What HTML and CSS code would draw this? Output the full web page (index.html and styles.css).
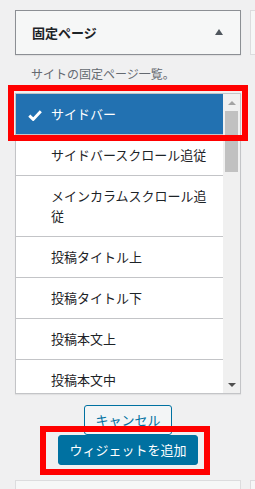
FILE: index.html
```html
<!DOCTYPE html>
<html lang="ja">
<head>
    <meta charset="UTF-8">
    <meta name="viewport" content="width=device-width, initial-scale=1.0">
    <title>ウィジェット</title>
    <link rel="stylesheet" href="styles.css">
</head>
<body>
    <div class="screen">
        <div class="area">
            <div class="widget-top">
                <h3 class="widget-title">固定ページ</h3>
                <span class="toggle-arrow"></span>
            </div>
            <p class="desc">サイトの固定ページ一覧。</p>
            <div class="picker">
                <ul class="options">
                    <li class="option selected">
                        <span class="mark">
                            <svg width="14" height="11" viewBox="0 0 14 11"><path d="M1.3 5.6 L5.2 9.4 L12.8 1.3" fill="none" stroke="#fff" stroke-width="2.9"/></svg>
                        </span>
                        <span class="label">サイドバー</span>
                    </li>
                    <li class="option"><span class="mark"></span><span class="label">サイドバースクロール追従</span></li>
                    <li class="option"><span class="mark"></span><span class="label">メインカラムスクロール追従</span></li>
                    <li class="option"><span class="mark"></span><span class="label">投稿タイトル上</span></li>
                    <li class="option"><span class="mark"></span><span class="label">投稿タイトル下</span></li>
                    <li class="option"><span class="mark"></span><span class="label">投稿本文上</span></li>
                    <li class="option"><span class="mark"></span><span class="label">投稿本文中</span></li>
                    <li class="option"><span class="mark"></span><span class="label">投稿本文下</span></li>
                </ul>
                <div class="scrollbar">
                    <span class="step"><span class="arrow-up"></span></span>
                    <span class="thumb"></span>
                    <span class="step bottom"><span class="arrow-down"></span></span>
                </div>
            </div>
            <div class="actions">
                <button class="btn cancel">キャンセル</button>
                <button class="btn add">ウィジェットを追加</button>
            </div>
            <div class="widget-next"></div>
        </div>
        <div class="area side">
            <div class="side-top"></div>
            <div class="side-next"></div>
        </div>
    </div>

    <div class="highlight first"></div>
    <div class="highlight second"></div>
</body>
</html>
```

FILE: styles.css
```css
* {
    box-sizing: border-box;
}

body {
    margin: 0;
    background-color: #f0f0f1;
    font-family: "Noto Sans CJK JP", "Noto Sans", sans-serif;
    color: #1d2327;
    overflow: hidden;
}

.screen {
    display: flex;
    gap: 9px;
    padding: 10px 0 0 15px;
}

.area {
    width: 226px;
    flex: none;
}

.widget-top {
    height: 45px;
    display: flex;
    align-items: center;
    justify-content: space-between;
    padding: 0 17px 0 16px;
    background-color: #f6f7f7;
    border: 1px solid #8c8f94;
    box-shadow: 0 1px 1px rgba(0, 0, 0, 0.06);
}

.widget-title {
    margin: 0;
    font-size: 13px;
    font-weight: 700;
    line-height: 20px;
}

.toggle-arrow {
    width: 0;
    height: 0;
    border-left: 4px solid transparent;
    border-right: 4px solid transparent;
    border-bottom: 6px solid #50575e;
    margin-top: -1px;
}

.desc {
    margin: 10px 0 10px 16px;
    font-size: 12px;
    line-height: 18px;
    color: #646970;
}

.picker {
    display: flex;
    height: 301px;
    background: #fff;
    border: 1px solid #c3c4c7;
    box-shadow: 0 1px 1px rgba(0, 0, 0, 0.06);
    overflow: hidden;
}

.options {
    list-style: none;
    margin: 0;
    padding: 0;
    flex: 1;
}

.option {
    display: flex;
    padding: 10px 10px 10px 12px;
    font-size: 13px;
    line-height: 20px;
    color: #1d2327;
    border-bottom: 1px solid #c3c4c7;
}

.option .mark {
    width: 23px;
    flex: none;
    display: flex;
    align-items: center;
    padding-top: 2px;
}

.option.selected {
    background-color: #2271b1;
    color: #fff;
}

.scrollbar {
    width: 17px;
    flex: none;
    display: flex;
    flex-direction: column;
    align-items: center;
    background-color: #f0f0f0;
}

.step {
    height: 17px;
    display: flex;
    align-items: center;
    justify-content: center;
}

.step.bottom {
    margin-top: auto;
}

.arrow-up {
    border-left: 4px solid transparent;
    border-right: 4px solid transparent;
    border-bottom: 4px solid #a3a3a3;
}

.arrow-down {
    border-left: 4px solid transparent;
    border-right: 4px solid transparent;
    border-top: 4px solid #505050;
}

.thumb {
    width: 13px;
    height: 61px;
    background-color: #c1c1c1;
}

.actions {
    display: flex;
    flex-direction: column;
    align-items: center;
    padding-top: 11px;
}

.btn {
    height: 30px;
    padding: 0 10px;
    font-family: "Noto Sans CJK JP", "Noto Sans", sans-serif;
    font-size: 13px;
    line-height: 28px;
    border-radius: 3px;
    cursor: pointer;
}

.cancel {
    color: #0071a1;
    background-color: #f3f5f6;
    border: 1px solid #0071a1;
}

.add {
    color: #fff;
    background-color: #0071a1;
    border: 1px solid #0071a1;
}

.widget-next {
    height: 40px;
    margin-top: 15px;
    background-color: #f6f7f7;
    border: 1px solid #dcdcde;
}

.side {
    width: 60px;
}

.side-top {
    height: 45px;
    background-color: #f6f7f7;
    border: 1px solid #dcdcde;
}

.side-next {
    height: 40px;
    margin-top: 425px;
    background-color: #f6f7f7;
    border: 1px solid #dcdcde;
}

.highlight {
    position: absolute;
    border: 6px solid #ff0000;
}

.highlight.first {
    left: 8px;
    top: 85px;
    width: 240px;
    height: 56px;
}

.highlight.second {
    left: 40px;
    top: 426px;
    width: 170px;
    height: 49px;
}
```
